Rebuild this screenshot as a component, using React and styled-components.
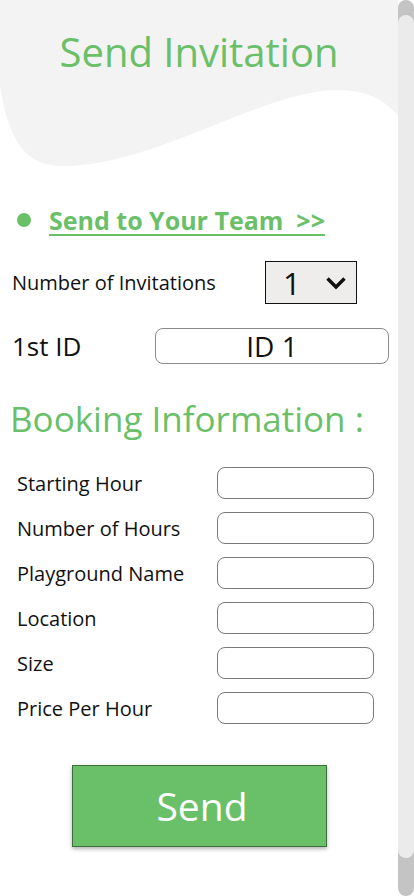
import React from "react";
import styled, { createGlobalStyle } from "styled-components";

const GREEN = "#6abf69";

const Global = createGlobalStyle`
  html, body { margin: 0; padding: 0; background: #fff; }
  body { font-family: "Open Sans", "Noto Sans", sans-serif; }
  * { box-sizing: border-box; }
`;

const Screen = styled.div`
  width: 414px;
  height: 896px;
  display: flex;
  overflow: hidden;
  background: #fff;
`;

const Main = styled.main`
  position: relative;
  width: 398px;
  height: 896px;
  display: flex;
  flex-direction: column;
`;

const Wave = styled.svg`
  position: absolute;
  top: 0;
  left: 0;
  width: 398px;
  height: 180px;
  z-index: 0;
`;

const Content = styled.div`
  position: relative;
  z-index: 1;
  display: flex;
  flex-direction: column;
`;

const Title = styled.h1`
  margin: 24px 0 0;
  font-size: 40px;
  line-height: 56px;
  font-weight: 400;
  color: ${GREEN};
  text-align: center;
`;

const TeamLink = styled.a`
  margin-top: 123px;
  margin-left: 17px;
  display: flex;
  align-items: center;
  gap: 18px;
  text-decoration: none;
  height: 34px;
`;

const Dot = styled.span`
  width: 14px;
  height: 14px;
  border-radius: 50%;
  background: ${GREEN};
  flex: none;
`;

const TeamText = styled.span`
  font-size: 25px;
  line-height: 34px;
  font-weight: 700;
  color: ${GREEN};
  white-space: pre;
  text-decoration: underline;
  text-decoration-thickness: 1.5px;
  text-underline-offset: 4px;
`;

const Row = styled.div`
  display: flex;
  align-items: center;
  margin-top: ${(p) => p.$mt}px;
  padding-left: ${(p) => p.$pl}px;
`;

const Label = styled.span`
  font-size: ${(p) => p.$size || 20}px;
  line-height: ${(p) => p.$lh || 27}px;
  color: #111;
  width: ${(p) => p.$w}px;
  flex: none;
  white-space: nowrap;
`;

const Select = styled.div`
  width: 92px;
  height: 43px;
  background: #eeedeb;
  border: 1px solid #111;
  display: flex;
  align-items: center;
  padding-left: 17px;
  gap: 24px;
  font-size: 31px;
  line-height: 40px;
  color: #111;
`;

const IdBox = styled.div`
  width: 234px;
  height: 36px;
  border: 1px solid #8a8a8a;
  border-radius: 8px;
  display: flex;
  align-items: center;
  justify-content: center;
  font-size: 28px;
  line-height: 36px;
  color: #111;
`;

const Heading = styled.h2`
  margin: 31px 0 0;
  padding-left: 10px;
  font-size: 35px;
  line-height: 48px;
  font-weight: 400;
  color: ${GREEN};
`;

const Fields = styled.div`
  margin-top: 24px;
  display: flex;
  flex-direction: column;
  gap: 13px;
  padding-left: 17px;
`;

const Field = styled.div`
  display: flex;
  align-items: center;
  height: 32px;
`;

const Input = styled.div`
  width: 157px;
  height: 32px;
  border: 1px solid #7a7a7a;
  border-radius: 8px;
  background: #fff;
`;

const SendButton = styled.button`
  margin: 41px auto 0;
  width: 255px;
  height: 82px;
  background: ${GREEN};
  border: 1px solid #3e6e3b;
  box-shadow: 0 2px 4px rgba(0, 0, 0, 0.3);
  color: #fff;
  font-family: "Open Sans", sans-serif;
  font-size: 39px;
  line-height: 54px;
  padding: 0 0 0 6px;
  cursor: pointer;
`;

const Scrollbar = styled.div`
  width: 16px;
  height: 896px;
  background: #c4c4c4;
  border-radius: 8px;
  padding-top: 15px;
  flex: none;
`;

const Track = styled.div`
  height: 843px;
  background: #ebebeb;
  border-radius: 8px;
`;

const fields = [
  "Starting Hour",
  "Number of Hours",
  "Playground Name",
  "Location",
  "Size",
  "Price Per Hour",
];

export default function App() {
  return (
    <>
      <Global />
      <Screen>
        <Main>
          <Wave viewBox="0 0 398 180" preserveAspectRatio="none">
            <path
              d="M0,0 H398 V116 C385,100 368,90 335,90 C260,92 150,168 60,166 C22,165 8,135 0,86 Z"
              fill="#f3f3f3"
            />
          </Wave>
          <Content>
            <Title>Send Invitation</Title>
            <TeamLink href="#">
              <Dot />
              <TeamText>{"Send to Your Team  >>"}</TeamText>
            </TeamLink>
            <Row $mt={24} $pl={12}>
              <Label $w={253}>Number of Invitations</Label>
              <Select>
                <span>1</span>
                <svg width="22" height="14" viewBox="0 0 22 14">
                  <path d="M2.5 2.5 L11 11 L19.5 2.5" fill="none" stroke="#111" strokeWidth="3.4" />
                </svg>
              </Select>
            </Row>
            <Row $mt={24} $pl={12}>
              <Label $size={26} $lh={36} $w={143}>1st ID</Label>
              <IdBox>ID 1</IdBox>
            </Row>
            <Heading>Booking Information :</Heading>
            <Fields>
              {fields.map((f) => (
                <Field key={f}>
                  <Label $w={200}>{f}</Label>
                  <Input />
                </Field>
              ))}
            </Fields>
            <SendButton>Send</SendButton>
          </Content>
        </Main>
        <Scrollbar>
          <Track />
        </Scrollbar>
      </Screen>
    </>
  );
}
